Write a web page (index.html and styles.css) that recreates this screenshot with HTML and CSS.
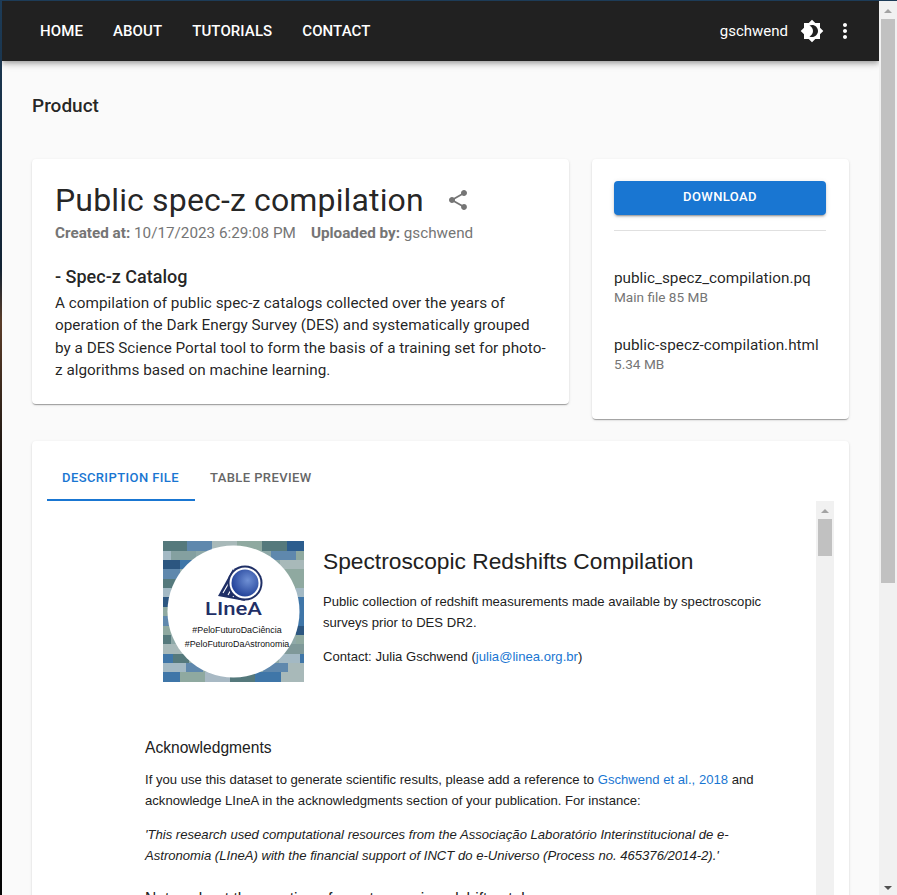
FILE: index.html
```html
<!DOCTYPE html>
<html lang="en">
<head>
    <meta charset="UTF-8">
    <meta name="viewport" content="width=device-width, initial-scale=1.0">
    <title>Product</title>
    <link rel="stylesheet" href="styles.css">
</head>
<body>
    <div class="desktop-edge"></div>
    <div class="window">
        <div class="page">
            <header class="appbar">
                <nav class="nav">
                    <a>Home</a>
                    <a>About</a>
                    <a>Tutorials</a>
                    <a>Contact</a>
                </nav>
                <div class="user">
                    <span class="user-name">gschwend</span>
                    <svg class="icon-theme" width="24" height="24" viewBox="0 0 24 24" fill="#fff"><path d="M20 8.69V4h-4.69L12 .69 8.69 4H4v4.69L.69 12 4 15.31V20h4.69L12 23.31 15.31 20H20v-4.69L23.31 12 20 8.69zM12 18c-.89 0-1.74-.2-2.5-.55C11.56 16.5 13 14.42 13 12s-1.44-4.5-3.5-5.45C10.26 6.2 11.11 6 12 6c3.31 0 6 2.69 6 6s-2.69 6-6 6z"/></svg>
                    <svg class="icon-more" width="24" height="24" viewBox="0 0 24 24" fill="#fff"><path d="M12 8c1.1 0 2-.9 2-2s-.9-2-2-2-2 .9-2 2 .9 2 2 2zm0 2c-1.1 0-2 .9-2 2s.9 2 2 2 2-.9 2-2-.9-2-2-2zm0 6c-1.1 0-2 .9-2 2s.9 2 2 2 2-.9 2-2-.9-2-2-2z"/></svg>
                </div>
            </header>

            <main class="content">
                <h6 class="page-title">Product</h6>

                <div class="top-row">
                    <section class="card info-card">
                        <div class="title-row">
                            <h1>Public spec-z compilation</h1>
                            <svg class="icon-share" width="24" height="24" viewBox="0 0 24 24" fill="#757575"><path d="M18 16.08c-.76 0-1.44.3-1.96.77L8.91 12.7c.05-.23.09-.46.09-.7s-.04-.47-.09-.7l7.05-4.11c.54.5 1.25.81 2.04.81 1.66 0 3-1.34 3-3s-1.34-3-3-3-3 1.34-3 3c0 .24.04.47.09.7L8.04 9.81C7.5 9.31 6.79 9 6 9c-1.66 0-3 1.34-3 3s1.34 3 3 3c.79 0 1.5-.31 2.04-.81l7.12 4.16c-.05.21-.08.43-.08.65 0 1.61 1.31 2.92 2.92 2.92s2.92-1.31 2.92-2.92-1.31-2.92-2.92-2.92z"/></svg>
                        </div>
                        <div class="meta">
                            <span><b>Created at:</b> 10/17/2023 6:29:08 PM</span>
                            <span><b>Uploaded by:</b> gschwend</span>
                        </div>
                        <h2>- Spec-z Catalog</h2>
                        <p class="summary">A compilation of public spec-z catalogs collected over the years of operation of the Dark Energy Survey (DES) and systematically grouped by a DES Science Portal tool to form the basis of a training set for photo-z algorithms based on machine learning.</p>
                    </section>

                    <aside class="card files-card">
                        <button class="download" type="button">Download</button>
                        <hr>
                        <div class="file">
                            <div class="file-name">public_specz_compilation.pq</div>
                            <div class="file-size">Main file 85 MB</div>
                        </div>
                        <div class="file">
                            <div class="file-name">public-specz-compilation.html</div>
                            <div class="file-size">5.34 MB</div>
                        </div>
                    </aside>
                </div>

                <section class="card tabs-card">
                    <div class="tabs">
                        <div class="tab active">Description file</div>
                        <div class="tab">Table preview</div>
                    </div>
                    <div class="frame">
                        <div class="frame-body">
                            <div class="intro">
                                <svg class="logo" width="141" height="141" viewBox="0 0 141 141">
                                    <defs>
                                        <radialGradient id="globe" cx="60%" cy="40%" r="65%">
                                            <stop offset="0" stop-color="#6f90d4"/>
                                            <stop offset="1" stop-color="#1f3f97"/>
                                        </radialGradient>
                                    </defs>
                                    <rect width="141" height="141" fill="#8fa9a8"/>
                                    <!-- brick rows, only the parts outside the circle show -->
                                    <g>
                                        <rect x="0" y="0" width="24" height="10" fill="#55797c"/>
                                        <rect x="24" y="0" width="25" height="10" fill="#5f88ad"/>
                                        <rect x="49" y="0" width="25" height="10" fill="#a8b9b9"/>
                                        <rect x="74" y="0" width="25" height="10" fill="#8fa9a0"/>
                                        <rect x="99" y="0" width="25" height="10" fill="#55797c"/>
                                        <rect x="124" y="0" width="17" height="10" fill="#2c5d8e"/>
                                        <rect x="0" y="10" width="8" height="9" fill="#a3b9c4"/>
                                        <rect x="8" y="10" width="25" height="9" fill="#84a0a0"/>
                                        <rect x="108" y="10" width="25" height="9" fill="#5f88ad"/>
                                        <rect x="133" y="10" width="8" height="9" fill="#8fa9a0"/>
                                        <rect x="0" y="19" width="17" height="9" fill="#2c5680"/>
                                        <rect x="17" y="19" width="14" height="9" fill="#3f76a8"/>
                                        <rect x="117" y="19" width="24" height="9" fill="#a8b9b9"/>
                                        <rect x="0" y="28" width="17" height="10" fill="#5f88ad"/>
                                        <rect x="117" y="28" width="24" height="10" fill="#8fa9a0"/>
                                        <rect x="0" y="38" width="17" height="9" fill="#55797c"/>
                                        <rect x="125" y="38" width="16" height="9" fill="#8fa9a0"/>
                                        <rect x="0" y="47" width="8" height="9" fill="#a3b9c4"/>
                                        <rect x="133" y="47" width="8" height="9" fill="#a3b9c4"/>
                                        <rect x="0" y="56" width="8" height="10" fill="#2c5680"/>
                                        <rect x="133" y="56" width="8" height="10" fill="#3f76a8"/>
                                        <rect x="0" y="66" width="8" height="9" fill="#8fa9a0"/>
                                        <rect x="133" y="66" width="8" height="9" fill="#3f76a8"/>
                                        <rect x="0" y="75" width="8" height="10" fill="#5f88ad"/>
                                        <rect x="133" y="75" width="8" height="10" fill="#3f76a8"/>
                                        <rect x="0" y="85" width="8" height="9" fill="#8fa9a0"/>
                                        <rect x="133" y="85" width="8" height="9" fill="#2c5680"/>
                                        <rect x="0" y="94" width="8" height="9" fill="#55797c"/>
                                        <rect x="133" y="94" width="8" height="9" fill="#8fa9a0"/>
                                        <rect x="0" y="103" width="24" height="10" fill="#a8b9b9"/>
                                        <rect x="117" y="103" width="24" height="10" fill="#7f9999"/>
                                        <rect x="0" y="113" width="10" height="9" fill="#3f76a8"/>
                                        <rect x="10" y="113" width="16" height="9" fill="#55797c"/>
                                        <rect x="116" y="113" width="21" height="9" fill="#a3b9c4"/>
                                        <rect x="137" y="113" width="4" height="9" fill="#3f76a8"/>
                                        <rect x="0" y="122" width="23" height="9" fill="#a3b9c4"/>
                                        <rect x="23" y="122" width="17" height="9" fill="#5f88ad"/>
                                        <rect x="100" y="122" width="25" height="9" fill="#5f88ad"/>
                                        <rect x="125" y="122" width="16" height="9" fill="#a8b9b9"/>
                                        <rect x="0" y="131" width="17" height="10" fill="#3f76a8"/>
                                        <rect x="17" y="131" width="25" height="10" fill="#8fa9a0"/>
                                        <rect x="42" y="131" width="25" height="10" fill="#a8b9c4"/>
                                        <rect x="67" y="131" width="25" height="10" fill="#55797c"/>
                                        <rect x="92" y="131" width="26" height="10" fill="#3f76a8"/>
                                        <rect x="118" y="131" width="23" height="10" fill="#a8b9b9"/>
                                    </g>
                                    <circle cx="70.5" cy="70.5" r="66" fill="#fff"/>
                                    <path d="M55 55 L70 28 L82 60 Z" fill="#1f2f66"/>
                                    <path d="M60 52 L71 33 M65 54 L74 38 M70 56 L77 44" stroke="#fff" stroke-width="1.1" fill="none"/>
                                    <circle cx="82" cy="42" r="17.5" fill="#1f2f66"/>
                                    <circle cx="82" cy="42" r="15.5" fill="#fff"/>
                                    <circle cx="82" cy="42" r="13.5" fill="url(#globe)"/>
                                    <text class="logo-name" x="42" y="74" textLength="57" lengthAdjust="spacingAndGlyphs">LIneA</text>
                                    <text class="logo-tag" x="74" y="92" text-anchor="middle">#PeloFuturoDaCiência</text>
                                    <text class="logo-tag" x="74" y="106" text-anchor="middle">#PeloFuturoDaAstronomia</text>
                                </svg>
                                <div class="intro-text">
                                    <h1>Spectroscopic Redshifts Compilation</h1>
                                    <p>Public collection of redshift measurements made available by spectroscopic surveys prior to DES DR2.</p>
                                    <p>Contact: Julia Gschwend (<a>julia@linea.org.br</a>)</p>
                                </div>
                            </div>
                            <h3>Acknowledgments</h3>
                            <p>If you use this dataset to generate scientific results, please add a reference to <a>Gschwend et al., 2018</a> and acknowledge LIneA in the acknowledgments section of your publication. For instance:</p>
                            <p class="quote">'This research used computational resources from the Associação Laboratório Interinstitucional de e-Astronomia (LIneA) with the financial support of INCT do e-Universo (Process no. 465376/2014-2).'</p>
                            <h3 class="notes">Notes about the creation of spectroscopic redshift catalogs</h3>
                        </div>
                        <div class="scrollbar">
                            <span class="arrow"></span>
                            <span class="thumb inner-thumb"></span>
                        </div>
                    </div>
                </section>
            </main>
        </div>
        <div class="scrollbar">
            <span class="arrow"></span>
            <span class="thumb page-thumb"></span>
            <span class="arrow down"></span>
        </div>
    </div>
</body>
</html>
```

FILE: styles.css
```css
* { box-sizing: border-box; }
html, body { height: 100%; }
body {
    margin: 0;
    display: flex;
    overflow: hidden;
    font-family: 'Roboto', sans-serif;
    color: rgba(0, 0, 0, 0.87);
    background: #1d3c58;
}
.desktop-edge {
    width: 2px;
    flex: none;
    background: linear-gradient(#1d3c58 0, #123 30%, #5a3c28 36%, #0c0c0c 55%, #050505 100%);
}
.window {
    flex: 1;
    display: flex;
    margin-top: 1px;
    min-width: 0;
}
.page {
    flex: 1;
    min-width: 0;
    overflow: hidden;
    background: #fafafa;
}

/* app bar */
.appbar {
    height: 60px;
    display: flex;
    align-items: center;
    justify-content: space-between;
    padding: 0 22px 0 38px;
    background: #212121;
    color: #fff;
    box-shadow: 0 2px 4px -1px rgba(0,0,0,.2), 0 4px 5px 0 rgba(0,0,0,.14), 0 1px 10px 0 rgba(0,0,0,.12);
    position: relative;
}
.nav { display: flex; gap: 30px; }
.nav a {
    font-size: 15px;
    font-weight: 500;
    line-height: 26px;
    text-transform: uppercase;
    letter-spacing: 0.1px;
}
.user { display: flex; align-items: center; }
.user-name { font-size: 15px; margin-right: 12px; }
.icon-more { margin-left: 9px; }

/* main */
.content { padding: 31px 30px 0; }
.page-title {
    margin: 0 0 39px;
    font-size: 19px;
    font-weight: 500;
    line-height: 28px;
}
.top-row {
    display: flex;
    align-items: flex-start;
    gap: 23px;
    margin-bottom: 22px;
}
.card {
    background: #fff;
    border-radius: 4px;
    box-shadow: 0 2px 1px -1px rgba(0,0,0,.2), 0 1px 1px 0 rgba(0,0,0,.14), 0 1px 3px 0 rgba(0,0,0,.12);
}
.info-card {
    width: 537px;
    height: 245px;
    padding: 20px 23px 0;
}
.title-row { display: flex; align-items: center; gap: 22px; }
.title-row h1 {
    margin: 0;
    font-size: 32px;
    font-weight: 400;
    line-height: 42px;
    letter-spacing: 0.15px;
}
.meta {
    display: flex;
    gap: 15px;
    margin-top: 1px;
    font-size: 15.25px;
    line-height: 22px;
    color: #757575;
}
.meta b { font-weight: 700; }
.info-card h2 {
    margin: 21px 0 0;
    font-size: 18px;
    font-weight: 500;
    line-height: 24px;
}
.summary {
    margin: 3px 0 0;
    font-size: 15.3px;
    line-height: 22.4px;
    color: rgba(0, 0, 0, 0.87);
}
.files-card {
    width: 257px;
    height: 260px;
    padding: 22px 23px 0 22px;
}
.download {
    display: block;
    width: 100%;
    height: 34px;
    padding: 0 0 4px;
    border: 0;
    border-radius: 4px;
    background: #1976d2;
    color: #fff;
    font-family: inherit;
    font-size: 13px;
    font-weight: 500;
    letter-spacing: 0.4px;
    text-transform: uppercase;
    box-shadow: 0 3px 1px -2px rgba(0,0,0,.2), 0 2px 2px 0 rgba(0,0,0,.14), 0 1px 5px 0 rgba(0,0,0,.12);
}
.files-card hr {
    margin: 15px 0 36px;
    border: 0;
    border-top: 1px solid #e0e0e0;
}
.file { margin-bottom: 29px; }
.file-name { font-size: 15.3px; line-height: 22px; }
.file-size { font-size: 13.6px; line-height: 16px; color: #757575; }

/* tabs */
.tabs-card { height: 500px; padding: 15px 15px 0; }
.tabs { display: flex; height: 45px; }
.tab {
    padding: 0 16px 0 15px;
    font-size: 13px;
    font-weight: 500;
    line-height: 44px;
    letter-spacing: 0.4px;
    text-transform: uppercase;
    color: #666;
}
.tab.active {
    color: #1976d2;
    border-bottom: 2px solid #1976d2;
}
.frame {
    display: flex;
    height: 420px;
}
.frame-body {
    flex: 1;
    min-width: 0;
    padding: 40px 50px 0 98px;
    font-family: 'Liberation Sans', sans-serif;
    font-size: 13.1px;
    line-height: 21px;
    color: #212121;
}
.frame-body p { margin: 0 0 13px; }
.frame-body a { color: #1976d2; }
.intro { display: flex; gap: 19px; margin-left: 18px; margin-bottom: 55px; }
.logo { flex: none; }
.logo-name { font-family: 'Roboto', sans-serif; font-size: 18px; font-weight: 500; fill: #1f2f66; }
.logo-tag { font-family: 'Liberation Sans', sans-serif; font-size: 8.9px; fill: #111; }
.intro-text h1 {
    margin: 6px 0 16px;
    font-size: 22.75px;
    font-weight: 400;
    line-height: 28px;
}
.frame-body h3 {
    margin: 0 0 10px;
    font-size: 15.6px;
    font-weight: 400;
    line-height: 22px;
}
.quote { font-style: italic; }
.frame-body h3.notes { margin-top: 22px; }

/* scrollbars */
.scrollbar {
    flex: none;
    width: 18px;
    display: flex;
    flex-direction: column;
    align-items: center;
    background: #f1f1f1;
}
.thumb { display: block; width: 14px; flex: none; background: #c1c1c1; margin-top: 6px; }
.inner-thumb { height: 37px; }
.page-thumb { height: 564px; }
.arrow {
    width: 0;
    height: 0;
    flex: none;
    margin-top: 8px;
    border-left: 4px solid transparent;
    border-right: 4px solid transparent;
    border-bottom: 4px solid #a3a3a3;
}
.arrow.down {
    margin-top: auto;
    margin-bottom: 5px;
    border-bottom: 0;
    border-top: 4px solid #505050;
}
```
